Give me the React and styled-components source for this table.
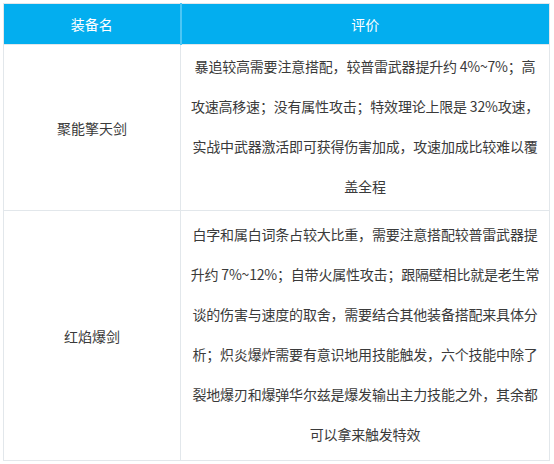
import React from "react";
import styled, { createGlobalStyle } from "styled-components";

const GlobalStyle = createGlobalStyle`
  html, body {
    margin: 0;
    padding: 0;
    background: #ffffff;
  }
  body {
    font-family: "Noto Sans CJK SC", "Noto Sans", sans-serif;
  }
`;

const Wrapper = styled.div`
  padding: 3px 4px 4px 3px;
`;

const Table = styled.table`
  width: 547px;
  border-collapse: collapse;
  table-layout: fixed;
  border: 1px solid #e2e7eb;
  font-size: 14px;
  color: #3a3a3a;
`;

const HeadCell = styled.th`
  height: 40px;
  padding: 0;
  background: #03aeef;
  color: #ffffff;
  font-weight: normal;
  text-align: center;
  border-left: ${(props) => (props.divider ? "2px solid #4cc6f4" : "none")};
`;

const NameCell = styled.td`
  border: 1px solid #e2e7eb;
  text-align: center;
  vertical-align: middle;
  padding: 0;
`;

const DescCell = styled.td`
  border: 1px solid #e2e7eb;
  text-align: center;
  line-height: 40px;
  padding: ${(props) => (props.last ? "3px 0 6px 0" : "1px 0 4px 0")};
`;

const Line = styled.div`
  white-space: nowrap;
  letter-spacing: -0.2px;
`;

const rows = [
  {
    name: "聚能擎天剑",
    desc: [
      "暴追较高需要注意搭配，较普雷武器提升约 4%~7%；高",
      "攻速高移速；没有属性攻击；特效理论上限是 32%攻速，",
      "实战中武器激活即可获得伤害加成，攻速加成比较难以覆",
      "盖全程",
    ],
  },
  {
    name: "红焰爆剑",
    desc: [
      "白字和属白词条占较大比重，需要注意搭配较普雷武器提",
      "升约 7%~12%；自带火属性攻击；跟隔壁相比就是老生常",
      "谈的伤害与速度的取舍，需要结合其他装备搭配来具体分",
      "析；炽炎爆炸需要有意识地用技能触发，六个技能中除了",
      "裂地爆刃和爆弹华尔兹是爆发输出主力技能之外，其余都",
      "可以拿来触发特效",
    ],
  },
];

export default function App() {
  return (
    <Wrapper>
      <GlobalStyle />
      <Table>
        <colgroup>
          <col style={{ width: 177 }} />
          <col />
        </colgroup>
        <thead>
          <tr>
            <HeadCell>装备名</HeadCell>
            <HeadCell divider>评价</HeadCell>
          </tr>
        </thead>
        <tbody>
          {rows.map((row, idx) => (
            <tr key={row.name}>
              <NameCell>{row.name}</NameCell>
              <DescCell last={idx === rows.length - 1}>
                {row.desc.map((line, i) => (
                  <Line key={i}>{line}</Line>
                ))}
              </DescCell>
            </tr>
          ))}
        </tbody>
      </Table>
    </Wrapper>
  );
}
